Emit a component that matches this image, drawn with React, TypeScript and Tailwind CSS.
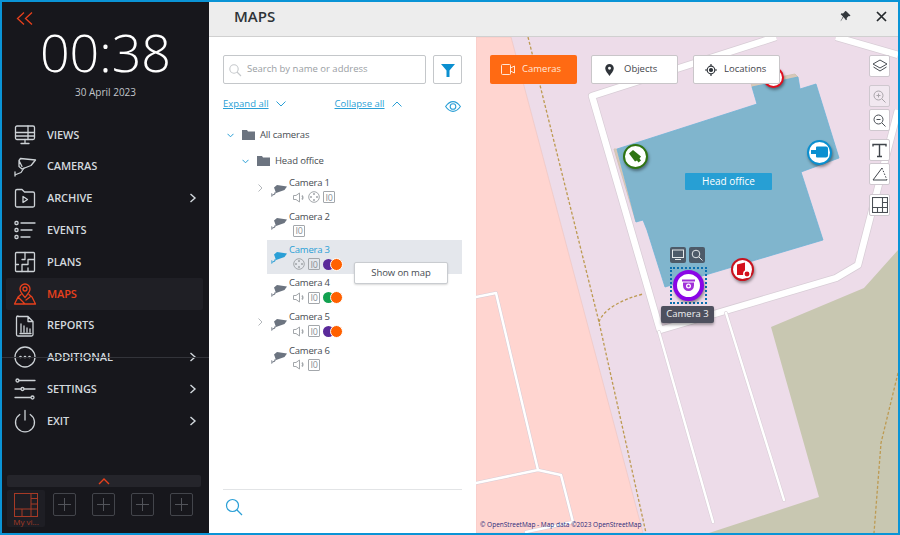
import type { ReactNode } from "react";

const navStroke = "#cdd2d6";
const red = "#e8401c";

function NavIcon({ children, color = navStroke }: { children: ReactNode; color?: string }) {
  return (
    <svg width="24" height="24" viewBox="0 0 24 24" fill="none" stroke={color} strokeWidth="1.300" strokeLinecap="round" strokeLinejoin="round">
      {children}
    </svg>
  );
}

const navItems: { label: string; more?: boolean; active?: boolean; icon: ReactNode }[] = [
  {
    label: "VIEWS",
    icon: (
      <NavIcon>
        <rect x="2.500" y="3" width="19" height="13.500" rx="1.500" />
        <path d="M2.500 9.500h19M2.500 13h19M15 3v13.500M8 20.500h8M12 16.500v4" />
      </NavIcon>
    ),
  },
  {
    label: "CAMERAS",
    icon: (
      <NavIcon>
        <path d="M6 5.500l1.500-2 15 1.500-4.500 5.500-9 3.500-3-2.500zM6 5.500l3 6" />
        <path d="M11 13l-3 4.500-5 2M2 17v4" />
      </NavIcon>
    ),
  },
  {
    label: "ARCHIVE",
    more: true,
    icon: (
      <NavIcon>
        <path d="M2.500 5a1.500 1.500 0 0 1 1.500-1.500h5l2.500 2.500h8.500a1.500 1.500 0 0 1 1.500 1.500v12a1.500 1.500 0 0 1-1.500 1.500h-16a1.500 1.500 0 0 1-1.500-1.500z" />
        <path d="M10 10.500l4.500 3-4.500 3z" />
      </NavIcon>
    ),
  },
  {
    label: "EVENTS",
    icon: (
      <NavIcon>
        <rect x="2" y="3.500" width="3" height="3" rx="1" />
        <rect x="2" y="10.500" width="3" height="3" rx="1" />
        <rect x="2" y="17.500" width="3" height="3" rx="1" />
        <path d="M8 5h14M8 12h11M8 19h9" />
      </NavIcon>
    ),
  },
  {
    label: "PLANS",
    icon: (
      <NavIcon>
        <rect x="2.500" y="2.500" width="19" height="19" rx="1" />
        <path d="M12 2.500v7M12 9.500h-3M15 9.500h6.500M15 9.500v5h-6v7M2.500 14.500h3M15 18v3.500" />
      </NavIcon>
    ),
  },
  {
    label: "MAPS",
    active: true,
    icon: (
      <NavIcon color={red}>
        <path d="M12 15.500c-3-3.500-5-5.800-5-8.500a5 5 0 0 1 10 0c0 2.700-2 5-5 8.500z" />
        <circle cx="12" cy="7" r="2" />
        <path d="M8 12.500l-3 2.500-3.500 7h21l-3.500-7-3-2.500M5 15l7 7M13 18l4-3" />
      </NavIcon>
    ),
  },
  {
    label: "REPORTS",
    icon: (
      <NavIcon>
        <path d="M5 2.500h10l5 5v13a1.500 1.500 0 0 1-1.500 1.500h-13.500a1.500 1.500 0 0 1-1.500-1.500v-17a1.500 1.500 0 0 1 1.500-1.500zM15 2.500v5h5" />
        <path d="M8 10v8M11 12v6M14 14v4M17 15v3M7 19.500h11" />
      </NavIcon>
    ),
  },
  {
    label: "ADDITIONAL",
    more: true,
    icon: (
      <NavIcon>
        <circle cx="12" cy="12" r="10" />
        <circle cx="7.500" cy="12" r=".7" fill={navStroke} />
        <circle cx="12" cy="12" r=".7" fill={navStroke} />
        <circle cx="16.500" cy="12" r=".7" fill={navStroke} />
      </NavIcon>
    ),
  },
  {
    label: "SETTINGS",
    more: true,
    icon: (
      <NavIcon>
        <circle cx="4.500" cy="3.500" r="1.500" />
        <path d="M6 3.500h16M2 12h6M11 12h11M2 20.500h15.500" />
        <circle cx="9.500" cy="12" r="1.500" />
        <circle cx="19.500" cy="20.500" r="1.500" />
      </NavIcon>
    ),
  },
  {
    label: "EXIT",
    more: true,
    icon: (
      <NavIcon>
        <path d="M12 1.500v9.500M6.800 5.500a9.500 9.500 0 1 0 10.400 0" />
      </NavIcon>
    ),
  },
];

function Sidebar() {
  return (
    <aside className="relative flex w-[207px] shrink-0 flex-col bg-[#17171c]">
      <div className="pl-[14px] pt-[10px]">
        <svg width="18" height="13" viewBox="0 0 18 13" fill="none" stroke={red} strokeWidth="1.300">
          <path d="M8 .5L1.500 6.500 8 12.500M16 .5L9.500 6.500 16 12.500" />
        </svg>
      </div>
      <div className="mt-[1px] text-center text-[52px] leading-[52px] font-light text-white">00:38</div>
      <div className="mt-[7px] text-center text-[10px] leading-[14px] text-[#c2c6ca]">30 April 2023</div>
      <nav className="ml-[4px] mr-[6px] mt-[20px] flex flex-col">
        {navItems.map((item) => (
          <div
            key={item.label}
            className={`flex h-[31.800px] items-center rounded-[2px] pl-[7px] pr-[6px] ${item.active ? "bg-[#1f1f25]" : ""}`}
          >
            {item.icon}
            <span className={`ml-[10px] flex-1 text-[11px] font-semibold tracking-[-0.1px] ${item.active ? "text-[#e8401c]" : "text-[#d3d9de]"}`}>
              {item.label}
            </span>
            {item.more && (
              <svg width="8" height="10" viewBox="0 0 8 10" fill="none" stroke="#d3d9de" strokeWidth="1.400">
                <path d="M1.500 1l4.500 4-4.500 4" />
              </svg>
            )}
          </div>
        ))}
      </nav>
      <div className="absolute left-0 right-0 top-[355px] h-px bg-[#33343a]" />
      <div className="mt-auto px-[5px] pb-[6px]">
        <div className="flex h-[12px] w-[194px] items-center justify-center rounded-[2px] bg-[#25252b]">
          <svg width="12" height="7" viewBox="0 0 12 7" fill="none" stroke={red} strokeWidth="1.400">
            <path d="M1 6l5-5 5 5" />
          </svg>
        </div>
        <div className="mt-[3px] flex items-start">
          <div className="flex h-[37px] w-[38px] flex-col items-center rounded-[2px] bg-[#1e1e24] pt-[3px]">
            <svg width="24" height="24" viewBox="0 0 24 24" fill="none" stroke="#a63a26" strokeWidth="1">
              <rect x=".5" y=".5" width="23" height="23" />
              <path d="M.5 16h23M17 .5v23M17 5.500h6.500M17 11h6.500M8 16v7.500" />
            </svg>
            <span className="text-[8px] leading-[10px] text-[#a63a26]">My vi...</span>
          </div>
          <div className="ml-[8px] mt-[3px] flex gap-[16px]">
            {[0, 1, 2, 3].map((i) => (
              <div key={i} className="flex h-[23px] w-[23px] items-center justify-center rounded-[2px] border border-[#43454b]">
                <svg width="13" height="13" viewBox="0 0 13 13" stroke="#52545a" strokeWidth="1">
                  <path d="M6.500 0v13M0 6.500h13" />
                </svg>
              </div>
            ))}
          </div>
        </div>
      </div>
    </aside>
  );
}

function CctvIcon({ color = "#6c7480" }: { color?: string }) {
  return (
    <svg width="16" height="13" viewBox="0 0 16 13" fill={color} className="shrink-0">
      <path d="M3 3.500L6 1l10 1.500-2.500 3.500L5 9z" />
      <path d="M5 8.500L4 10.500 1.200 11.700 1.200 12.700 .4 12.700V9.300H1.200V10.700L3.200 9.700 3.800 8z" />
    </svg>
  );
}

function Speaker() {
  return (
    <svg width="12" height="11" viewBox="0 0 12 11" fill="none" stroke="#a3a7ab" strokeWidth="1">
      <path d="M.5 3.500h2.500L6.500 1v9L3 7.500H.5z" />
      <path d="M9 3.500c1 1 1 3 0 4" strokeWidth="1.600" />
    </svg>
  );
}

function Ptz() {
  return (
    <svg width="12" height="12" viewBox="0 0 12 12" fill="none" stroke="#a3a7ab" strokeWidth="1">
      <circle cx="6" cy="6" r="5.300" />
      <circle cx="6" cy="3" r=".6" fill="#a3a7ab" />
      <circle cx="6" cy="9" r=".6" fill="#a3a7ab" />
      <circle cx="3" cy="6" r=".6" fill="#a3a7ab" />
      <circle cx="9" cy="6" r=".6" fill="#a3a7ab" />
    </svg>
  );
}

function Io() {
  return (
    <span className="flex h-[12px] w-[12px] items-center justify-center rounded-[1px] border border-[#a3a7ab] text-[9px] leading-none tracking-[-0.3px] text-[#8a8f94]">
      I0
    </span>
  );
}

function Dots({ left }: { left: string }) {
  return (
    <span className="flex items-center">
      <span className="h-[11px] w-[11px] rounded-full" style={{ backgroundColor: left }} />
      <span className="ml-[-4px] h-[13px] w-[13px] rounded-full border border-white bg-[#ff6000]" />
    </span>
  );
}

const cameras = [
  { name: "Camera 1", expandable: true, audio: true, ptz: true },
  { name: "Camera 2" },
  { name: "Camera 3", selected: true, ptz: true, dot: "#5a2a9a" },
  { name: "Camera 4", audio: true, dot: "#12a150" },
  { name: "Camera 5", expandable: true, audio: true, dot: "#5a2a9a" },
  { name: "Camera 6", audio: true },
];

function Folder() {
  return (
    <svg width="13" height="10" viewBox="0 0 13 10" fill="#6c7480" className="shrink-0">
      <path d="M0 0h5l1 1.500h7V10H0z" />
    </svg>
  );
}

function TreeChevron() {
  return (
    <svg width="7" height="5" viewBox="0 0 7 5" fill="none" stroke="#2a9fd6" strokeWidth="1" className="shrink-0">
      <path d="M.5 .8L3.500 3.800 6.500 .8" />
    </svg>
  );
}

function CameraTree() {
  return (
    <div className="relative flex flex-col">
      <div className="flex h-[26px] items-center pl-[4px] text-[9.500px] tracking-[-0.15px] text-[#474c52]">
        <TreeChevron />
        <span className="ml-[8px]"><Folder /></span>
        <span className="ml-[5px]">All cameras</span>
      </div>
      <div className="flex h-[26px] items-center pl-[19px] text-[9.500px] tracking-[-0.15px] text-[#474c52]">
        <TreeChevron />
        <span className="ml-[8px]"><Folder /></span>
        <span className="ml-[5px]">Head office</span>
      </div>
      <div className="ml-[44px] mt-[-1px] flex flex-col">
        {cameras.map((cam) => (
          <div key={cam.name} className={`relative flex h-[33.500px] items-center pl-[4px] pt-[1px] ${cam.selected ? "bg-[#e4e7ec]" : ""}`}>
            {cam.expandable && (
              <svg width="5" height="8" viewBox="0 0 5 8" fill="none" stroke="#b4b8bc" className="absolute left-[-9px] top-[11px]">
                <path d="M.5 .5l3.500 3.500-3.500 3.500" />
              </svg>
            )}
            <CctvIcon color={cam.selected ? "#2a9fd6" : "#6c7480"} />
            <div className="ml-[2px] flex flex-col">
              <span className={`text-[9.500px] leading-[12px] tracking-[-0.2px] ${cam.selected ? "text-[#2a9fd6]" : "text-[#474c52]"}`}>{cam.name}</span>
              <span className="ml-[4px] mt-[2px] flex items-center gap-[3px]">
                {cam.audio && <Speaker />}
                {cam.ptz && <Ptz />}
                <Io />
                {cam.dot && <Dots left={cam.dot} />}
              </span>
            </div>
          </div>
        ))}
      </div>
      <div className="absolute left-[131px] top-[140px] flex h-[22px] w-[94px] items-center justify-center rounded-[2px] border border-[#c9ccd0] bg-white text-[9.500px] tracking-[-0.1px] text-[#474c52] shadow-[0_1px_2px_rgba(0,0,0,0.15)]">
        Show on map
      </div>
    </div>
  );
}

function CameraPanel() {
  return (
    <section className="flex w-[267px] shrink-0 flex-col bg-white px-[14px]">
      <div className="mt-[18px] flex gap-[7px]">
        <div className="flex h-[29px] w-[203px] items-center rounded-[2px] border border-[#c4c7ca] pl-[4px]">
          <svg width="14" height="14" viewBox="0 0 14 14" fill="none" stroke="#c6c9cc" strokeWidth="1.100">
            <circle cx="6" cy="6" r="4.200" />
            <path d="M9 9l4 4" />
          </svg>
          <span className="ml-[5px] text-[9.500px] text-[#9a9ea3]">Search by name or address</span>
        </div>
        <div className="flex h-[29px] w-[29px] items-center justify-center rounded-[2px] border border-[#c4c7ca]">
          <svg width="14" height="14" viewBox="0 0 14 14" fill="#0b8fd0">
            <path d="M0 1h14L8.500 7.500V14h-3V7.500z" />
          </svg>
        </div>
      </div>
      <div className="mt-[12px] flex h-[16px] items-center text-[9.500px] text-[#2a9fd6]">
        <span className="underline">Expand all</span>
        <svg width="10" height="6" viewBox="0 0 10 6" fill="none" stroke="#2a9fd6" strokeWidth="1" className="ml-[7px]">
          <path d="M.5 .5L5 5 9.500 .5" />
        </svg>
        <span className="ml-[49px] underline">Collapse all</span>
        <svg width="10" height="6" viewBox="0 0 10 6" fill="none" stroke="#2a9fd6" strokeWidth="1" className="ml-[7px]">
          <path d="M.5 5.500L5 1l4.500 4.500" />
        </svg>
        <svg width="16" height="11" viewBox="0 0 16 11" fill="none" stroke="#2a9fd6" strokeWidth="1.100" className="ml-auto mr-[1px] mt-[4px]">
          <path d="M.6 5.500C3 2 5.500 .6 8 .6s5 1.400 7.400 4.900C13 9 10.500 10.400 8 10.400S3 9 .6 5.500z" />
          <circle cx="8" cy="5.500" r="2.800" />
        </svg>
      </div>
      <div className="mt-[10px]">
        <CameraTree />
      </div>
      <div className="mt-auto border-t border-[#e2e4e6] pb-[17px] pl-[2px] pt-[8px]">
        <svg width="18" height="18" viewBox="0 0 18 18" fill="none" stroke="#2a9fd6" strokeWidth="1.200">
          <circle cx="7.500" cy="7.500" r="6" />
          <path d="M12 12l5 5" />
        </svg>
      </div>
    </section>
  );
}

function MapBase() {
  const thick = "M776 37L592 96L660 330L836 278L858 265L898 110M836 37L898 55";
  const thin = "M659 332L713 522M726 313L784 500M476 297L496 293L538 470L476 483M538 470L561 475L573 522L526 532";
  return (
    <svg className="absolute inset-0" width="422" height="496" viewBox="476 37 422 496">
      <rect x="476" y="37" width="422" height="496" fill="#eddce9" />
      <path d="M476 37H511L643 533H476z" fill="#ffd5d0" stroke="#ecc4c0" strokeWidth=".6" />
      <path d="M771 327L864 288L898 250V533H709L819 497z" fill="#c8c7b1" />
      <path d={thick} fill="none" stroke="#d8cdd6" strokeWidth="8" strokeLinejoin="round" />
      <path d={thick} fill="none" stroke="#fff" strokeWidth="6.500" strokeLinejoin="round" />
      <path d={thin} fill="none" stroke="#d8cdd6" strokeWidth="3.500" strokeLinejoin="round" strokeLinecap="round" />
      <path d={thin} fill="none" stroke="#fff" strokeWidth="2.500" strokeLinejoin="round" strokeLinecap="round" />
      <path
        d="M528 37L599 322L646 533M599 322C603 310 620 300 643 294M898 373L881 443L874 533"
        fill="none"
        stroke="#bd9a52"
        strokeWidth="1.300"
        strokeDasharray="3 2"
      />
      <path d="M752 87L751 83L795 74L798 77L752 87zM617 149L614 149L636 222" fill="#d8c8b8" stroke="#d2c4b6" />
      <path
        d="M617 149L757 104L752 87L798 77L800 89L816 84L839 158L801 172L823 240L665 287L647 230L643 220L636 222z"
        fill="#80b5cd"
        stroke="#6fb2d5"
        strokeWidth=".8"
      />
    </svg>
  );
}

function MapButton({ label, active, icon, className }: { label: string; active?: boolean; icon: ReactNode; className?: string }) {
  return (
    <div
      className={`flex h-[29px] w-[87px] items-center rounded-[2px] text-[9.500px] ${
        active ? "bg-[#ff6a13] pl-[11px] text-[#ffe7d8]" : "border border-[#c9c6c9] bg-white pl-[12px] text-[#3f444a]"
      } ${className ?? ""}`}
    >
      {icon}
      <span className="ml-[7px]">{label}</span>
    </div>
  );
}

function ToolButton({ children, dim, className }: { children: ReactNode; dim?: boolean; className?: string }) {
  return (
    <div className={`flex h-[22px] w-[21px] items-center justify-center rounded-[2px] border border-[#cfc8cf] ${dim ? "bg-[#f1e8f0]" : "bg-white"} ${className ?? ""}`}>
      {children}
    </div>
  );
}

function Marker({ x, y, size, border, children }: { x: number; y: number; size: number; border: string; children: ReactNode }) {
  return (
    <div
      className="absolute flex items-center justify-center rounded-full border-2 bg-white shadow-[1px_2px_3px_rgba(0,0,0,0.4)]"
      style={{ left: x - size / 2, top: y - size / 2, width: size, height: size, borderColor: border }}
    >
      {children}
    </div>
  );
}

function MapPanel() {
  return (
    <section className="relative flex-1 overflow-hidden">
      <MapBase />

      {/* camera behind the Locations button */}
      <Marker x={297} y={40} size={21} border="#e01020">
        <span />
      </Marker>

      <div className="absolute left-[14px] top-[18px] flex gap-[14px]">
        <MapButton
          active
          label="Cameras"
          icon={
            <svg width="14" height="11" viewBox="0 0 14 11" fill="none" stroke="#ffe7d8" strokeWidth="1">
              <rect x=".5" y=".5" width="9" height="10" rx="1" />
              <path d="M9.500 4l4-2v7l-4-2" />
            </svg>
          }
        />
        <MapButton
          label="Objects"
          icon={
            <svg width="11" height="12" viewBox="0 0 11 14" fill="#2f343a" className="mr-[2px]">
              <path fillRule="evenodd" d="M5.500 0a5 5 0 0 1 5 5c0 3.300-3 6-5 9-2-3-5-5.700-5-9a5 5 0 0 1 5-5zm0 3.300a1.700 1.700 0 1 0 0 3.400 1.700 1.700 0 0 0 0-3.400z" />
            </svg>
          }
        />
        <MapButton
          label="Locations"
          className="ml-[1px] !pl-[11px]"
          icon={
            <svg width="12" height="12" viewBox="0 0 12 12" fill="none" stroke="#2f343a" strokeWidth="1.200">
              <circle cx="6" cy="6" r="3.800" />
              <circle cx="6" cy="6" r="1.500" fill="#2f343a" />
              <path d="M6 0v2M6 10v2M0 6h2M10 6h2" />
            </svg>
          }
        />
      </div>

      <div className="absolute left-[393px] top-[18px] flex flex-col">
        <ToolButton>
          <svg width="16" height="14" viewBox="0 0 16 14" fill="none" stroke="#4a4f55" strokeWidth="1">
            <path d="M8 1l7 4-7 4-7-4zM1.500 8L8 12l6.500-4" />
          </svg>
        </ToolButton>
        <ToolButton dim className="mt-[8px]">
          <svg width="13" height="13" viewBox="0 0 13 13" fill="none" stroke="#a9a5aa" strokeWidth="1">
            <circle cx="5.500" cy="5.500" r="4.500" />
            <path d="M9 9l3.500 3.500M3.500 5.500h4M5.500 3.500v4" />
          </svg>
        </ToolButton>
        <ToolButton className="mt-[2px]">
          <svg width="13" height="13" viewBox="0 0 13 13" fill="none" stroke="#4a4f55" strokeWidth="1">
            <circle cx="5.500" cy="5.500" r="4.500" />
            <path d="M9 9l3.500 3.500M3.500 5.500h4" />
          </svg>
        </ToolButton>
        <ToolButton className="mt-[8px]">
          <svg width="15" height="15" viewBox="0 0 15 15" fill="none" stroke="#3f444a" strokeWidth="1.400">
            <path d="M1 3.500V1.500h13v2M7.500 1.500v12M5 13.500h5" />
          </svg>
        </ToolButton>
        <ToolButton className="mt-[2px]">
          <svg width="16" height="14" viewBox="0 0 16 14" fill="none" stroke="#3f444a" strokeWidth="1">
            <path d="M1 13L10 1" />
            <path d="M1 13h14" />
            <path d="M10 1l5 12" strokeDasharray="1.500 1.500" />
          </svg>
        </ToolButton>
        <ToolButton className="mt-[9px]">
          <svg width="16" height="16" viewBox="0 0 16 16" fill="none" stroke="#4a4f55" strokeWidth="1.100">
            <rect x=".5" y=".5" width="15" height="15" />
            <path d="M.5 10.500h15M10.500 .5v15M10.500 5.500h5M5.500 10.500v5" />
          </svg>
        </ToolButton>
      </div>

      <div className="absolute left-[209px] top-[136px] flex h-[17px] w-[87px] items-center justify-center rounded-[1px] bg-[#279fd4] text-[10px] text-white">
        Head office
      </div>

      <Marker x={159} y={119} size={25} border="#2f7412">
        <svg width="15" height="15" viewBox="0 0 15 15" fill="#2f7412">
          <path d="M1 4.500L5 1l8 6.500-1.500 2 1.500 2-2.500 2-1.500-2-2 1z" />
        </svg>
      </Marker>
      <Marker x={343} y={115} size={25} border="#0a8fd0">
        <svg width="17" height="12" viewBox="0 0 17 12" fill="#0a8fd0">
          <path d="M5 1.500a1 1 0 0 1 1-1h9a2 2 0 0 1 2 2v7a2 2 0 0 1-2 2H6a1 1 0 0 1-1-1V8H0V4h5z" />
        </svg>
      </Marker>
      <Marker x={266} y={232} size={23} border="#c8121e">
        <svg width="17" height="17" viewBox="0 0 17 17">
          <path d="M3 3.500L11 1.500V14H3z" fill="#d4101c" />
          <circle cx="13" cy="13" r="3.200" fill="#d4101c" stroke="#fff" strokeWidth="1.500" />
        </svg>
      </Marker>

      {/* selected camera with its actions and tooltip */}
      <div className="absolute left-[194px] top-[210px] flex gap-[3px]">
        <div className="flex h-[16px] w-[16px] items-center justify-center rounded-[2px] bg-[#4d5a68]">
          <svg width="12" height="12" viewBox="0 0 12 12" fill="none" stroke="#e4e8ea" strokeWidth="1">
            <rect x=".5" y="1" width="11" height="7.500" />
            <path d="M3 10.500h6" />
          </svg>
        </div>
        <div className="flex h-[16px] w-[16px] items-center justify-center rounded-[2px] bg-[#4d5a68]">
          <svg width="12" height="12" viewBox="0 0 12 12" fill="none" stroke="#e4e8ea" strokeWidth="1">
            <circle cx="5" cy="5" r="3.800" />
            <path d="M8 8l3.500 3.500" />
          </svg>
        </div>
      </div>
      <div className="absolute left-[194px] top-[230px] flex h-[37px] w-[37px] items-center justify-center border-2 border-dotted border-[#0a6fb0]">
        <div className="flex h-[31px] w-[31px] shrink-0 items-center justify-center rounded-full border-[4px] border-[#8a05e6] bg-white shadow-[1px_2px_3px_rgba(0,0,0,0.4)]">
          <svg width="15" height="15" viewBox="0 0 15 15" fill="#a030d8">
            <path d="M1 1.500h13v2H1z" />
            <path fillRule="evenodd" d="M2 4.500h11v3a5.500 5.500 0 0 1-11 0zM7.500 5.500a2.500 2.500 0 1 0 0 5 2.500 2.500 0 0 0 0-5z" />
            <circle cx="7.500" cy="8" r="1.200" />
          </svg>
        </div>
      </div>
      <div className="absolute left-[185px] top-[269px] flex h-[17px] w-[53px] items-center justify-center rounded-[2px] bg-[#4e505e] text-[9.500px] text-[#f0f0f2] shadow-[0_2px_3px_rgba(0,0,0,0.35)]">
        Camera 3
      </div>

      <div className="absolute bottom-[3px] left-[4px] text-[6.500px] leading-[10px] text-[#2a2a7a]">
        © OpenStreetMap - Map data ©2023 OpenStreetMap
      </div>
    </section>
  );
}

export default function App() {
  return (
    <div className="flex h-[535px] w-[900px] overflow-hidden border-2 border-[#0a94d6] font-['Open_Sans','Noto_Sans',sans-serif]">
      <Sidebar />
      <main className="flex min-w-0 flex-1 flex-col">
        <header className="flex h-[35px] shrink-0 items-center border-b border-[#d0d0d0] bg-[#ededed] pb-[6px] pl-[25px] pr-[11px]">
          <h1 className="flex-1 text-[15px] font-semibold text-[#2e3338]">MAPS</h1>
          <svg width="11" height="11" viewBox="0 0 11 11" fill="#33383d">
            <path d="M6.500 .5l4 4-1 .8-.8-.3-2 2 .2 1.500-.9.800L3.500 6 .8 10.200.6 10 3 5.500 .7 3.200l.8-.9 1.500.2 2-2-.3-.8z" />
          </svg>
          <svg width="11" height="11" viewBox="0 0 11 11" fill="none" stroke="#24282c" strokeWidth="1.700" className="ml-[25px]">
            <path d="M1 1l9 9M10 1l-9 9" />
          </svg>
        </header>
        <div className="flex min-h-0 flex-1">
          <CameraPanel />
          <MapPanel />
        </div>
      </main>
    </div>
  );
}
